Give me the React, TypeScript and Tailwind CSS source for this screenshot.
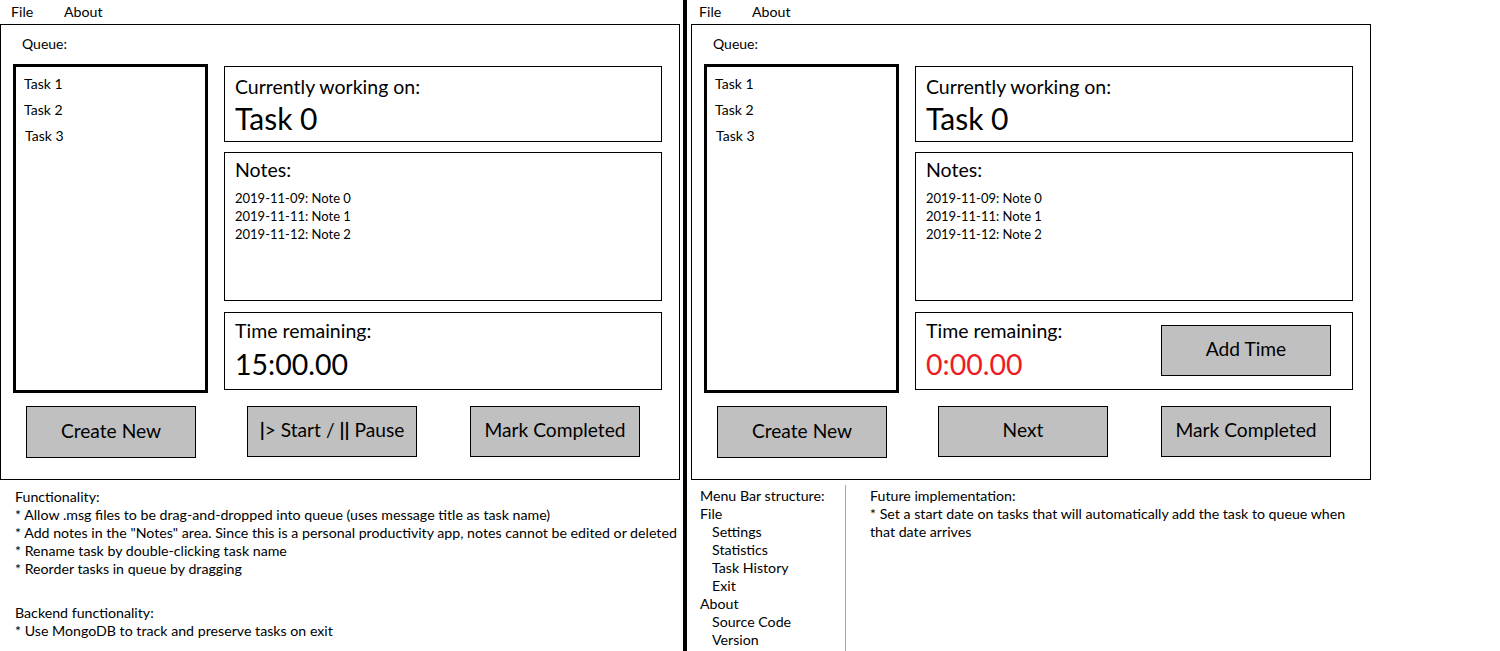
import React from "react";

type PanelProps = {
  centerLabel: React.ReactNode;
  finished?: boolean;
};

function GrayButton({ label, className = "" }: { label: React.ReactNode; className?: string }) {
  return (
    <div
      className={`w-[170px] h-[51px] bg-[#c0c0c0] border border-black flex items-center justify-center pb-[3px] text-[19.2px] leading-[26px] ${className}`}
    >
      {label}
    </div>
  );
}

function MenuBar({ offset }: { offset: string }) {
  return (
    <div className={`h-[24px] flex items-center text-[14.2px] leading-[18px] ${offset}`}>
      <span className="w-[53px]">File</span>
      <span>About</span>
    </div>
  );
}

function Panel({ centerLabel, finished = false }: PanelProps) {
  const tasks = ["Task 1", "Task 2", "Task 3"];
  const notes = ["2019-11-09: Note 0", "2019-11-11: Note 1", "2019-11-12: Note 2"];

  return (
    <div className="h-[456px] border border-black flex flex-col">
      {/* Queue label */}
      <div className="pt-[10px] pl-[21px] text-[14px] leading-[18px]">Queue:</div>

      <div className="mt-[11px] pl-[12px] flex">
        {/* Queue list */}
        <div className="w-[195px] h-[329px] border-[3px] border-black pt-[4px] pl-[8px] text-[14px]">
          {tasks.map((t, i) => (
            <div key={t} className={`leading-[26px] ${i === 2 ? "pl-[1px]" : ""}`}>
              {t}
            </div>
          ))}
        </div>

        {/* Right side */}
        <div className="ml-[16px] mt-[2px] w-[438px] flex flex-col">
          <div className="h-[76px] border border-black px-[10px] pt-[7px]">
            <div className="text-[19.5px] leading-[26px]">Currently working on:</div>
            <div className="text-[30px] leading-[36px]">Task 0</div>
          </div>

          <div className="mt-[10px] h-[149px] border border-black px-[10px] pt-[4px]">
            <div className="text-[19.5px] leading-[26px]">Notes:</div>
            <div className="mt-[6px] text-[13px] leading-[18px]">
              {notes.map((n) => (
                <div key={n}>{n}</div>
              ))}
            </div>
          </div>

          <div className="mt-[11px] h-[78px] border border-black pl-[10px] pr-[21px] flex items-center justify-between">
            <div className="self-start pt-[5px]">
              <div className="text-[19.5px] leading-[26px]">Time remaining:</div>
              <div
                className={`mt-[2px] text-[28.5px] leading-[36px] ${finished ? "text-[#ed1c24]" : ""}`}
              >
                {finished ? "0:00.00" : "15:00.00"}
              </div>
            </div>
            {finished && <GrayButton label="Add Time" className="mb-[2px]" />}
          </div>
        </div>
      </div>

      {/* Bottom buttons */}
      <div className="mt-[13px] pl-[25px] flex items-start">
        <GrayButton label="Create New" className="h-[52px]" />
        <GrayButton label={centerLabel} className="ml-[51px]" />
        <GrayButton label="Mark Completed" className="ml-[53px]" />
      </div>
    </div>
  );
}

export default function App() {
  return (
    <div className="w-[1500px] h-[651px] overflow-hidden bg-white text-black flex font-[family-name:Lato,sans-serif]">
      {/* Left mockup */}
      <div className="w-[680px] flex flex-col">
        <MenuBar offset="pl-[11px]" />
        <Panel
          centerLabel={
            <span>
              <span className="font-bold">|</span>&gt; Start / <span className="font-bold">||</span> Pause
            </span>
          }
        />
        <div className="pl-[15px] pt-[8px] text-[14.2px] leading-[18px]">
          <div>Functionality:</div>
          <div>* Allow .msg files to be drag-and-dropped into queue (uses message title as task name)</div>
          <div>
            * Add notes in the "Notes" area. Since this is a personal productivity app, notes cannot be edited or deleted
          </div>
          <div>* Rename task by double-clicking task name</div>
          <div>* Reorder tasks in queue by dragging</div>
          <div className="mt-[26px]">Backend functionality:</div>
          <div>* Use MongoDB to track and preserve tasks on exit</div>
        </div>
      </div>

      {/* Divider */}
      <div className="w-[4px] h-full bg-black ml-[3px] mr-[4px]" />

      {/* Right mockup */}
      <div className="w-[680px] flex flex-col">
        <MenuBar offset="pl-[8px]" />
        <Panel centerLabel="Next" finished />
        <div className="flex flex-1 text-[14.2px] leading-[18px]">
          <div className="w-[154px] pl-[9px] pt-[7px]">
            <div>Menu Bar structure:</div>
            <div>File</div>
            <div className="pl-[12px]">Settings</div>
            <div className="pl-[12px]">Statistics</div>
            <div className="pl-[12px]">Task History</div>
            <div className="pl-[12px]">Exit</div>
            <div>About</div>
            <div className="pl-[12px]">Source Code</div>
            <div className="pl-[12px]">Version</div>
          </div>
          <div className="w-px mt-[5px] bg-[#a6a6a6]" />
          <div className="pl-[24px] pt-[7px]">
            <div>Future implementation:</div>
            <div>
              * Set a start date on tasks that will automatically add the task to queue when
              <br />
              that date arrives
            </div>
          </div>
        </div>
      </div>
    </div>
  );
}
